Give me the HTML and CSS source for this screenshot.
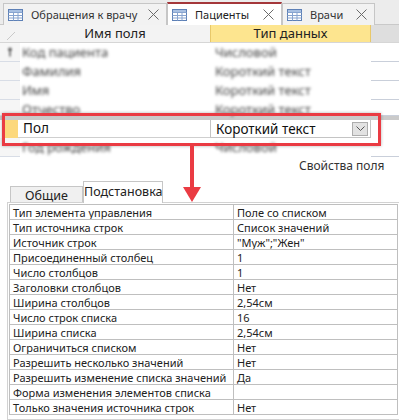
FILE: index.html
```html
<!DOCTYPE html>
<html lang="ru">
  <head>
    <meta charset="UTF-8" />
    <title>Пациенты</title>
    <link rel="stylesheet" href="styles.css">
  </head>
  <body>
    <div class="page">
      <!-- Document tabs -->
      <div class="doc-tabs">
        <div class="doc-tab tab-visits">
          <svg class="tbl-icon" width="15" height="12" viewBox="0 0 15 12">
            <rect x="0.5" y="0.5" width="14" height="11" fill="#fff" stroke="#5d80b6"/>
            <rect x="1" y="1" width="13" height="2.5" fill="#a8c0e2"/>
            <path d="M0.5 3.5H14.5M0.5 6.5H14.5M0.5 9H14.5M5.5 3.5V11.5M10 3.5V11.5" stroke="#88a4cf" fill="none"/>
          </svg>
          <span class="tab-name">Обращения к врачу</span>
          <svg class="close" width="11" height="11" viewBox="0 0 11 11"><path d="M0.5 0.5L10.5 10.5M10.5 0.5L0.5 10.5" stroke="#6a6a6a" fill="none"/></svg>
        </div>
        <div class="doc-tab tab-patients active">
          <svg class="tbl-icon" width="15" height="12" viewBox="0 0 15 12">
            <rect x="0.5" y="0.5" width="14" height="11" fill="#fff" stroke="#5d80b6"/>
            <rect x="1" y="1" width="13" height="2.5" fill="#a8c0e2"/>
            <path d="M0.5 3.5H14.5M0.5 6.5H14.5M0.5 9H14.5M5.5 3.5V11.5M10 3.5V11.5" stroke="#88a4cf" fill="none"/>
          </svg>
          <span class="tab-name">Пациенты</span>
          <svg class="close" width="11" height="11" viewBox="0 0 11 11"><path d="M0.5 0.5L10.5 10.5M10.5 0.5L0.5 10.5" stroke="#6a6a6a" fill="none"/></svg>
        </div>
        <div class="doc-tab tab-doctors">
          <svg class="tbl-icon" width="15" height="12" viewBox="0 0 15 12">
            <rect x="0.5" y="0.5" width="14" height="11" fill="#fff" stroke="#5d80b6"/>
            <rect x="1" y="1" width="13" height="2.5" fill="#a8c0e2"/>
            <path d="M0.5 3.5H14.5M0.5 6.5H14.5M0.5 9H14.5M5.5 3.5V11.5M10 3.5V11.5" stroke="#88a4cf" fill="none"/>
          </svg>
          <span class="tab-name">Врачи</span>
          <svg class="close" width="11" height="11" viewBox="0 0 11 11"><path d="M0.5 0.5L10.5 10.5M10.5 0.5L0.5 10.5" stroke="#6a6a6a" fill="none"/></svg>
        </div>
      </div>

      <!-- Field grid -->
      <div class="grid">
        <div class="grid-head">
          <div class="sel corner">
            <svg width="20" height="18" viewBox="0 0 20 18"><path d="M7 15L15 7" stroke="#c9c9c9" fill="none"/></svg>
          </div>
          <div class="col-name">Имя поля</div>
          <div class="col-type">Тип данных</div>
          <div class="col-rest"></div>
        </div>

        <div class="row">
          <div class="sel">
            <svg class="key" width="6" height="10" viewBox="0 0 6 10"><circle cx="3" cy="2.5" r="2" fill="#666"/><rect x="2.2" y="3.5" width="1.6" height="6" fill="#666"/></svg>
          </div>
          <div class="name"><span class="soft">Код пациента</span></div>
          <div class="type"><span class="soft">Числовой</span></div>
          <div class="rest"></div>
        </div>
        <div class="row">
          <div class="sel"></div>
          <div class="name"><span class="soft">Фамилия</span></div>
          <div class="type"><span class="soft">Короткий текст</span></div>
          <div class="rest"></div>
        </div>
        <div class="row">
          <div class="sel"></div>
          <div class="name"><span class="soft">Имя</span></div>
          <div class="type"><span class="soft">Короткий текст</span></div>
          <div class="rest"></div>
        </div>
        <div class="row short">
          <div class="sel"></div>
          <div class="name"><span class="soft">Отчество</span></div>
          <div class="type"><span class="soft">Короткий текст</span></div>
          <div class="rest"></div>
        </div>

        <div class="current">
          <div class="cur-sel"></div>
          <div class="cur-name">Пол</div>
          <div class="cur-type">
            <span>Короткий текст</span>
            <span class="drop">
              <svg width="9" height="5" viewBox="0 0 9 5"><path d="M0.5 0.5L4.5 4.5L8.5 0.5" stroke="#555" fill="none"/></svg>
            </span>
          </div>
        </div>

        <div class="row">
          <div class="sel"></div>
          <div class="name"><span class="soft">Год рождения</span></div>
          <div class="type"><span class="soft">Числовой</span></div>
          <div class="rest"></div>
        </div>
      </div>

      <!-- Field properties -->
      <div class="props-title">Свойства поля</div>

      <div class="prop-tabs">
        <div class="prop-tab general">Общие</div>
        <div class="prop-tab lookup">Подстановка</div>
      </div>

      <div class="prop-panel">
        <table class="props">
          <tr><td>Тип элемента управления</td><td>Поле со списком</td></tr>
          <tr><td>Тип источника строк</td><td>Список значений</td></tr>
          <tr><td>Источник строк</td><td>"Муж";"Жен"</td></tr>
          <tr><td>Присоединенный столбец</td><td>1</td></tr>
          <tr><td>Число столбцов</td><td>1</td></tr>
          <tr><td>Заголовки столбцов</td><td>Нет</td></tr>
          <tr><td>Ширина столбцов</td><td>2,54см</td></tr>
          <tr><td>Число строк списка</td><td>16</td></tr>
          <tr><td>Ширина списка</td><td>2,54см</td></tr>
          <tr><td>Ограничиться списком</td><td>Нет</td></tr>
          <tr><td>Разрешить несколько значений</td><td>Нет</td></tr>
          <tr><td>Разрешить изменение списка значений</td><td>Да</td></tr>
          <tr><td>Форма изменения элементов списка</td><td></td></tr>
          <tr><td>Только значения источника строк</td><td>Нет</td></tr>
        </table>
      </div>

      <!-- Annotation -->
      <div class="focus-frame"></div>
      <div class="arrow-line"></div>
      <div class="arrow-head"></div>
    </div>
  </body>
</html>
```

FILE: styles.css
```css
* {
  margin: 0;
  padding: 0;
  box-sizing: border-box;
}

body {
  font-family: "Noto Sans", "Open Sans", sans-serif;
  background: #fff;
  color: #222;
}

.page {
  position: relative;
  width: 399px;
  height: 420px;
  overflow: hidden;
}

/* Document tabs */
.doc-tabs {
  display: flex;
  height: 25px;
  padding: 3px 0 0 3px;
  background: #ececec;
  border-bottom: 1px solid #c9c9c9;
}

.doc-tab {
  display: flex;
  align-items: center;
  height: 22px;
  padding: 0 7px 0 4px;
  background: #f2f2f2;
  border: 1px solid #c6c6c6;
  border-bottom: none;
  font-size: 11px;
  color: #333;
}

.doc-tab .tbl-icon {
  flex: none;
}

.doc-tab .tab-name {
  margin-left: 8px;
  white-space: nowrap;
}

.doc-tab .close {
  flex: none;
  margin-left: auto;
}

.tab-visits {
  width: 164px;
}

.tab-patients {
  width: 115px;
}

.tab-doctors {
  width: 93px;
}

.doc-tab.active {
  height: 23px;
  margin-top: -1px;
  background: #fff;
  border-top: 2px solid #a4373a;
  color: #222;
}

/* Field grid */
.grid {
  background: #fff;
}

.grid-head {
  display: flex;
  height: 18px;
  background: #f3f3f3;
  border-bottom: 1px solid #d6d6d6;
  font-size: 13px;
  color: #222;
}

.grid-head .sel {
  width: 20px;
}

.col-name {
  width: 190px;
  text-align: center;
  line-height: 17px;
}

.col-type {
  width: 161px;
  text-align: center;
  line-height: 17px;
  background: #fde58f;
  border-left: 1px solid #e8c86a;
  border-right: 1px solid #e8c86a;
}

.col-rest {
  flex: 1;
  background: #dedede;
}

.row {
  display: flex;
  height: 19px;
  font-size: 13px;
}

.row.short {
  height: 16px;
}

.row .sel {
  width: 20px;
  display: flex;
  align-items: center;
  justify-content: center;
  background: #f6f6f6;
  border-bottom: 1px solid #d8dde6;
}

.row .key {
  filter: blur(0.8px);
}

.row .name {
  width: 190px;
  padding-left: 2px;
  line-height: 19px;
}

.row .type {
  width: 161px;
  padding-left: 5px;
  line-height: 19px;
}

.row .rest {
  flex: 1;
  border-bottom: 1px solid #c9cfda;
}

.soft {
  display: inline-block;
  color: #444;
  filter: blur(1.4px);
  white-space: nowrap;
}

.row.short .soft {
  margin-top: -1px;
}

/* Current row (Пол) */
.current {
  display: flex;
  height: 22px;
  padding-left: 4px;
  background: #fff;
  border-top: 4px solid #cacaca;
  font-size: 13.5px;
  color: #111;
}

.cur-sel {
  width: 14px;
  background: #fcd87c;
}

.cur-name {
  width: 192px;
  padding-left: 5px;
  line-height: 17px;
  border-bottom: 1px solid #cfcfcf;
}

.cur-type {
  display: flex;
  align-items: center;
  width: 161px;
  height: 18px;
  padding: 0 2px 0 5px;
  border: 1px solid #c4c4c4;
  border-top: none;
}

.cur-type .drop {
  display: flex;
  align-items: center;
  justify-content: center;
  width: 16px;
  height: 14px;
  margin-left: auto;
  background: #e2e2e2;
  border: 1px solid #adadad;
}

/* Properties */
.props-title {
  margin-top: 2px;
  padding-left: 299px;
  font-size: 12px;
  line-height: 14px;
  color: #333;
}

.prop-tabs {
  display: flex;
  align-items: flex-end;
  height: 22px;
  margin-top: 7px;
  padding-left: 10px;
  font-size: 12.5px;
  color: #222;
}

.prop-tab {
  border: 1px solid #c6c6c6;
  border-bottom: none;
  text-align: center;
}

.prop-tab.general {
  width: 73px;
  height: 16px;
  line-height: 15px;
  background: #f0f0f0;
  padding-top: 1px;
}

.prop-tab.lookup {
  width: 80px;
  height: 22px;
  line-height: 19px;
  background: #fff;
  margin-bottom: -1px;
  position: relative;
}

.prop-panel {
  margin-left: 7px;
  padding: 1px 1px 4px 1px;
  border: 1px solid #d2d2d2;
  border-right: none;
}

.props {
  width: 389px;
  border-collapse: collapse;
  font-size: 11px;
  color: #222;
}

.props td {
  height: 15px;
  padding: 0 3px;
  line-height: 13px;
  border: 1px solid #bfbfbf;
  white-space: nowrap;
  overflow: hidden;
}

.props td:first-child {
  width: 224px;
  max-width: 224px;
}

/* Annotation */
.focus-frame {
  position: absolute;
  left: 2px;
  top: 113px;
  width: 379px;
  height: 33px;
  border: 3px solid #ea3b43;
  box-shadow: 0 0 3px rgba(0, 0, 0, 0.3);
}

.arrow-line {
  position: absolute;
  left: 190px;
  top: 146px;
  width: 4px;
  height: 42px;
  background: #ea3b43;
}

.arrow-head {
  position: absolute;
  left: 183px;
  top: 187px;
  width: 0;
  height: 0;
  border-left: 9px solid transparent;
  border-right: 9px solid transparent;
  border-top: 15px solid #ea3b43;
}
```
